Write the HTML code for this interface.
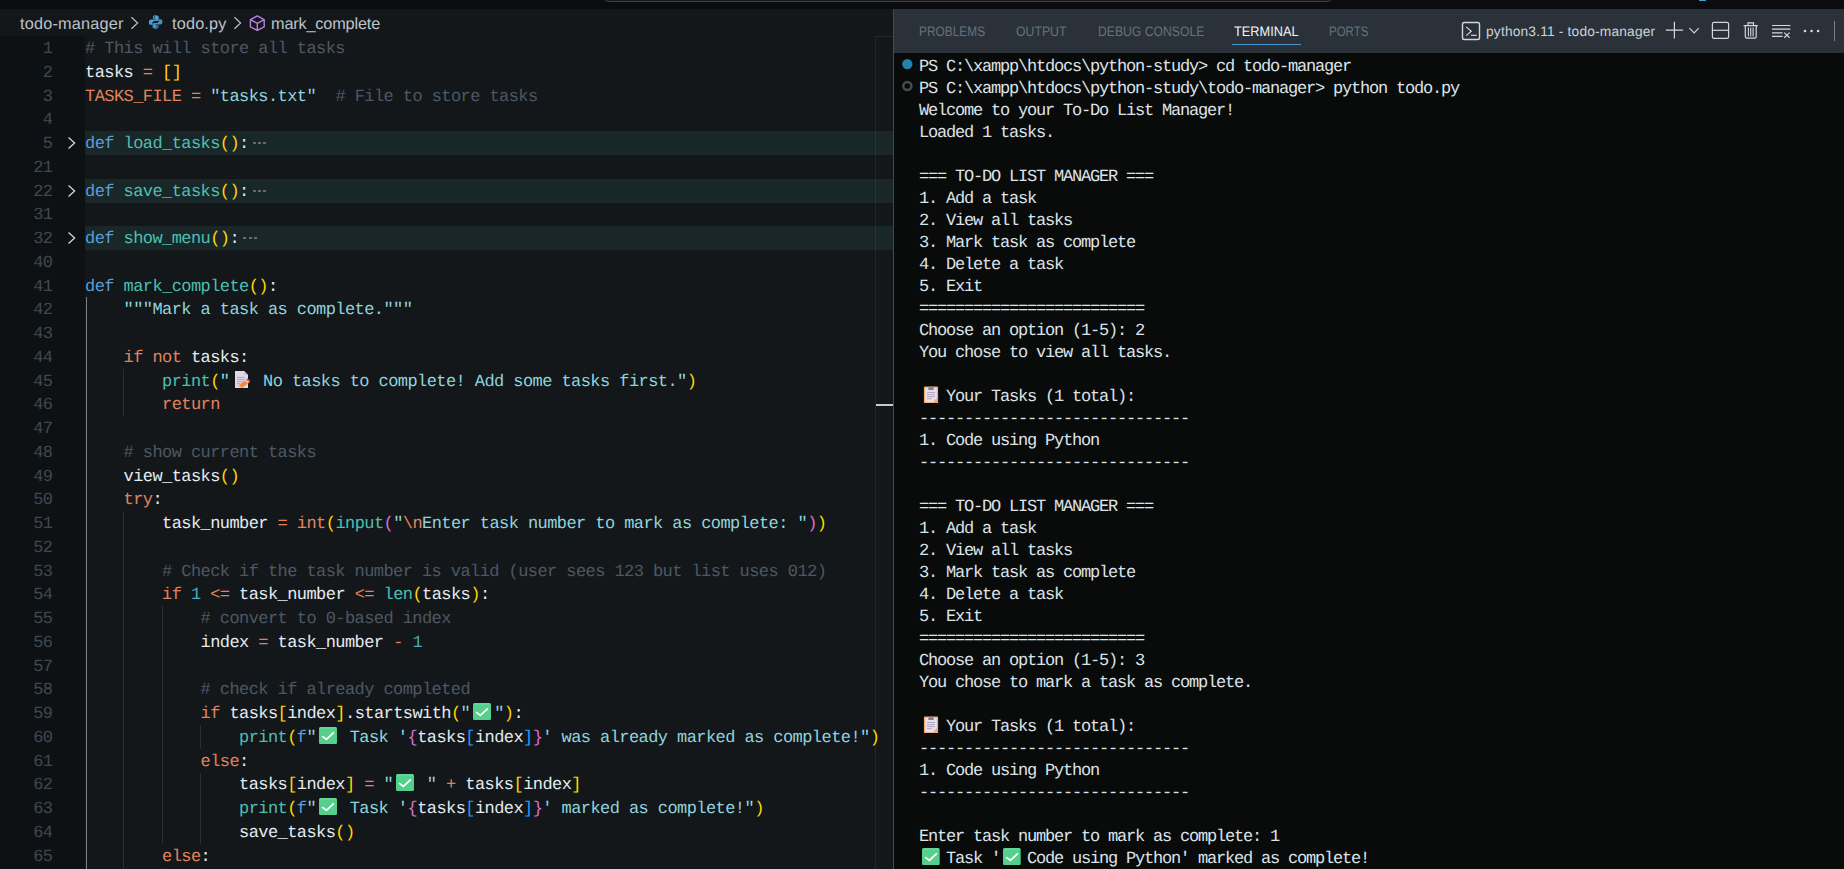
<!DOCTYPE html>
<html lang="en"><head><meta charset="utf-8"><title>todo.py - todo-manager - Visual Studio Code</title>
<style>
*{box-sizing:border-box}
html,body{margin:0;padding:0;overflow:hidden}
body{width:1844px;height:869px;overflow:hidden;position:relative;background:#14171a;
 font-family:"Liberation Sans",sans-serif;color:#d6dde3;text-rendering:geometricPrecision}
#top{position:absolute;left:0;top:0;width:1844px;height:9px;background:#0b0c0f;overflow:hidden}
#search{position:absolute;left:602px;top:-24px;width:732px;height:26px;border:1px solid #3d3f43;border-radius:7px;background:#17181b}
#topblue{position:absolute;left:1699px;top:0;width:7px;height:1px;background:#3f9fd6}
#crumbs{position:absolute;left:0;top:9px;width:893px;height:27.25px;background:#14171a;font-size:16.25px;line-height:31px;color:#bcc3ca;white-space:nowrap}
#crumbs span, #crumbs svg{position:absolute}
#editor{position:absolute;left:0;top:0;width:893px;height:869px;overflow:hidden}
#gutter{position:absolute;left:0;top:36.25px;width:85px;height:840px;background:#0e1113}
.row{position:absolute;left:0;width:893px;height:23.75px;line-height:23.75px;font-family:"Liberation Mono",monospace;font-size:17px;letter-spacing:-0.575px;white-space:pre}
.hl{position:absolute;z-index:0;left:85px;top:0;width:808px;height:23.75px;background:#1a2729}
.num{position:absolute;left:0;top:2px;width:52.5px;text-align:right;color:#3f4851}
.code{position:absolute;z-index:2;left:85px;top:2px;color:#e4ebf1}
.chev{position:absolute;left:66.2px;top:5px}
.g{position:absolute;top:0;width:1px;height:23.75px;display:block}
.g0{background:#7d8083;width:1.25px;top:-0.6px;height:24.35px}
.g1{background:#2a2f34}
.c{color:#4d5863}.v{color:#e4ebf1}.o{color:#e2835c}.k{color:#e2835c}.n{color:#e2835c}
.d{color:#5a9fd8}.f{color:#4ebfb2}.s{color:#8fd4de}.q{color:#8fd4de}.nu{color:#4aa9bd}

.b1{color:#ffd700}.b2{color:#da70d6}.b3{color:#179fff}
.e{display:inline-block;width:24px;height:23.75px;vertical-align:top;position:relative;letter-spacing:0}
.e svg{position:absolute;left:2.9px;top:0}
.ec{position:absolute;left:0;top:0;font-size:0;line-height:0;width:0;height:0;overflow:hidden;opacity:0}
.dots{display:inline-block;width:24px;height:23.75px;vertical-align:top;position:relative}
.dots i{position:absolute;top:9px;width:3px;height:2px;background:#676a6b;display:block}
.dots i:nth-child(1){left:4.4px}.dots i:nth-child(2){left:9.5px}.dots i:nth-child(3){left:14.6px}
#mm{position:absolute;left:875px;top:36px;width:18px;height:840px;border-left:1px solid rgba(255,255,255,0.065);border-top:1px solid rgba(255,255,255,0.065);z-index:1}
#mmark{position:absolute;z-index:3;left:876px;top:404px;width:17px;height:2px;background:#c9c9c9}
#panel{position:absolute;left:893px;top:9px;width:951px;height:860px;background:#090b0b;border-left:1px solid #3f4a51;overflow:hidden}
#phead{position:absolute;left:0;top:0;width:951px;height:44px;background:#2a3138}
.tab{position:absolute;top:14.5px;transform-origin:0 0;font-size:13.75px;line-height:16px;color:#66727e;white-space:nowrap}
.tab.act{color:#f1f4f6}
#tul{position:absolute;left:338px;top:35px;width:69px;height:1.25px;background:#4896cd}
#tname{position:absolute;left:592px;top:13px;font-size:13.75px;letter-spacing:0.18px;line-height:20px;color:#ccd3d9;white-space:nowrap}
#panel svg.ic{position:absolute}
#vsep{position:absolute;left:940px;top:12px;width:1px;height:20px;background:#7b828a}
#term{position:absolute;left:0;top:0;width:1844px;height:869px;overflow:hidden;font-family:"Liberation Mono",monospace;font-size:17px;letter-spacing:-1.2px;color:#dde3e9}
.tr{position:absolute;left:919px;height:22px;line-height:24px;white-space:pre}
.te{display:inline-block;width:18px;height:22px;vertical-align:top;position:relative;letter-spacing:0}
.te svg{position:absolute;left:3px;top:0}
.dot{position:absolute;border-radius:50%}
</style></head>
<body>
<div id="editor"><div id="gutter"></div>
<div class="row" style="top:36.25px"><span class="num" style="top:1.75px">1</span><span class="code" style="top:1.75px"><span class="c"># This will store all tasks</span></span></div>
<div class="row" style="top:60.00px"><span class="num" style="top:2.00px">2</span><span class="code" style="top:2.00px"><span class="v">tasks</span> <span class="o">=</span> <span class="b1">[]</span></span></div>
<div class="row" style="top:83.75px"><span class="num" style="top:2.25px">3</span><span class="code" style="top:2.25px"><span class="n">TASKS_FILE</span> <span class="o">=</span> <span class="q">"</span><span class="s">tasks.txt</span><span class="q">"</span>  <span class="c"># File to store tasks</span></span></div>
<div class="row" style="top:107.50px"><span class="num" style="top:1.50px">4</span></div>
<div class="row fold" style="top:131.25px"><div class="hl"></div><span class="num" style="top:1.75px">5</span><svg class="chev" width="12" height="14" viewBox="0 0 12 14"><path d="M2.5 1.5 L8.6 7 L2.5 12.5" fill="none" stroke="#d2d6da" stroke-width="1.3"/></svg><span class="code" style="top:1.75px"><span class="d">def</span> <span class="f">load_tasks</span><span class="b1">()</span><span class="v">:</span><span class="dots"><i></i><i></i><i></i></span></span></div>
<div class="row" style="top:155.00px"><span class="num" style="top:2.00px">21</span></div>
<div class="row fold" style="top:178.75px"><div class="hl"></div><span class="num" style="top:2.25px">22</span><svg class="chev" width="12" height="14" viewBox="0 0 12 14"><path d="M2.5 1.5 L8.6 7 L2.5 12.5" fill="none" stroke="#d2d6da" stroke-width="1.3"/></svg><span class="code" style="top:2.25px"><span class="d">def</span> <span class="f">save_tasks</span><span class="b1">()</span><span class="v">:</span><span class="dots"><i></i><i></i><i></i></span></span></div>
<div class="row" style="top:202.50px"><span class="num" style="top:1.50px">31</span></div>
<div class="row fold" style="top:226.25px"><div class="hl"></div><span class="num" style="top:1.75px">32</span><svg class="chev" width="12" height="14" viewBox="0 0 12 14"><path d="M2.5 1.5 L8.6 7 L2.5 12.5" fill="none" stroke="#d2d6da" stroke-width="1.3"/></svg><span class="code" style="top:1.75px"><span class="d">def</span> <span class="f">show_menu</span><span class="b1">()</span><span class="v">:</span><span class="dots"><i></i><i></i><i></i></span></span></div>
<div class="row" style="top:250.00px"><span class="num" style="top:2.00px">40</span></div>
<div class="row" style="top:273.75px"><span class="num" style="top:2.25px">41</span><span class="code" style="top:2.25px"><span class="d">def</span> <span class="f">mark_complete</span><span class="b1">()</span><span class="v">:</span></span></div>
<div class="row" style="top:297.50px"><i class="g g0" style="left:85.75px"></i><span class="num" style="top:1.50px">42</span><span class="code" style="top:1.50px">    <span class="q">"""</span><span class="s">Mark a task as complete.</span><span class="q">"""</span></span></div>
<div class="row" style="top:321.25px"><i class="g g0" style="left:85.75px"></i><span class="num" style="top:1.75px">43</span></div>
<div class="row" style="top:345.00px"><i class="g g0" style="left:85.75px"></i><span class="num" style="top:2.00px">44</span><span class="code" style="top:2.00px">    <span class="k">if</span> <span class="k">not</span> <span class="v">tasks:</span></span></div>
<div class="row" style="top:368.75px"><i class="g g0" style="left:85.75px"></i><i class="g g1" style="left:123.00px"></i><span class="num" style="top:2.25px">45</span><span class="code" style="top:2.25px">        <span class="f">print</span><span class="b1">(</span><span class="q">"</span><span class="e"><svg class="em" width="18" height="17.2" viewBox="0 0 18 17.2"><g transform="translate(0.7 0)"><path d="M2.3 0 H11.4 L15.3 3.9 V17.1 H2.3 Z" fill="#e2d8ec"/><path d="M11.4 0 L15.3 3.9 H11.4 Z" fill="#c8bdd6"/><path d="M4.3 6.6 H12 M4.3 8.7 H12 M4.3 10.8 H10.5 M4.3 12.8 H8" stroke="#a9a0b8" stroke-width="0.9" fill="none"/><path d="M5.2 17.1 L6.4 14.2 L14.6 7.4 L17.6 10.4 L9.4 17.1 Z" fill="#f58a3a"/><path d="M5.2 17.1 L6.4 14.2 L8.6 16.6 L8 17.1 Z" fill="#f7d3b0"/><path d="M13.2 8.6 L14.6 7.4 L17.6 10.4 L16.2 11.6 Z" fill="#f2553f"/><path d="M12.3 9.3 L13.2 8.6 L16.2 11.6 L15.3 12.3 Z" fill="#e9dfe6"/></g></svg><span class="ec">📝</span></span><span class="s"> No tasks to complete! Add some tasks first.</span><span class="q">"</span><span class="b1">)</span></span></div>
<div class="row" style="top:392.50px"><i class="g g0" style="left:85.75px"></i><i class="g g1" style="left:123.00px"></i><span class="num" style="top:1.50px">46</span><span class="code" style="top:1.50px">        <span class="k">return</span></span></div>
<div class="row" style="top:416.25px"><i class="g g0" style="left:85.75px"></i><span class="num" style="top:1.75px">47</span></div>
<div class="row" style="top:440.00px"><i class="g g0" style="left:85.75px"></i><span class="num" style="top:2.00px">48</span><span class="code" style="top:2.00px">    <span class="c"># show current tasks</span></span></div>
<div class="row" style="top:463.75px"><i class="g g0" style="left:85.75px"></i><span class="num" style="top:2.25px">49</span><span class="code" style="top:2.25px">    <span class="v">view_tasks</span><span class="b1">()</span></span></div>
<div class="row" style="top:487.50px"><i class="g g0" style="left:85.75px"></i><span class="num" style="top:1.50px">50</span><span class="code" style="top:1.50px">    <span class="k">try</span><span class="v">:</span></span></div>
<div class="row" style="top:511.25px"><i class="g g0" style="left:85.75px"></i><i class="g g1" style="left:123.00px"></i><span class="num" style="top:1.75px">51</span><span class="code" style="top:1.75px">        <span class="v">task_number</span> <span class="o">=</span> <span class="k">int</span><span class="b1">(</span><span class="f">input</span><span class="b2">(</span><span class="q">"</span><span class="k">\n</span><span class="s">Enter task number to mark as complete: </span><span class="q">"</span><span class="b2">)</span><span class="b1">)</span></span></div>
<div class="row" style="top:535.00px"><i class="g g0" style="left:85.75px"></i><i class="g g1" style="left:123.00px"></i><span class="num" style="top:2.00px">52</span></div>
<div class="row" style="top:558.75px"><i class="g g0" style="left:85.75px"></i><i class="g g1" style="left:123.00px"></i><span class="num" style="top:2.25px">53</span><span class="code" style="top:2.25px">        <span class="c"># Check if the task number is valid (user sees 123 but list uses 012)</span></span></div>
<div class="row" style="top:582.50px"><i class="g g0" style="left:85.75px"></i><i class="g g1" style="left:123.00px"></i><span class="num" style="top:1.50px">54</span><span class="code" style="top:1.50px">        <span class="k">if</span> <span class="nu">1</span> <span class="o">&lt;=</span> <span class="v">task_number</span> <span class="o">&lt;=</span> <span class="f">len</span><span class="b1">(</span><span class="v">tasks</span><span class="b1">)</span><span class="v">:</span></span></div>
<div class="row" style="top:606.25px"><i class="g g0" style="left:85.75px"></i><i class="g g1" style="left:123.00px"></i><i class="g g1" style="left:162.00px"></i><span class="num" style="top:1.75px">55</span><span class="code" style="top:1.75px">            <span class="c"># convert to 0-based index</span></span></div>
<div class="row" style="top:630.00px"><i class="g g0" style="left:85.75px"></i><i class="g g1" style="left:123.00px"></i><i class="g g1" style="left:162.00px"></i><span class="num" style="top:2.00px">56</span><span class="code" style="top:2.00px">            <span class="v">index</span> <span class="o">=</span> <span class="v">task_number</span> <span class="o">-</span> <span class="nu">1</span></span></div>
<div class="row" style="top:653.75px"><i class="g g0" style="left:85.75px"></i><i class="g g1" style="left:123.00px"></i><i class="g g1" style="left:162.00px"></i><span class="num" style="top:2.25px">57</span></div>
<div class="row" style="top:677.50px"><i class="g g0" style="left:85.75px"></i><i class="g g1" style="left:123.00px"></i><i class="g g1" style="left:162.00px"></i><span class="num" style="top:1.50px">58</span><span class="code" style="top:1.50px">            <span class="c"># check if already completed</span></span></div>
<div class="row" style="top:701.25px"><i class="g g0" style="left:85.75px"></i><i class="g g1" style="left:123.00px"></i><i class="g g1" style="left:162.00px"></i><span class="num" style="top:1.75px">59</span><span class="code" style="top:1.75px">            <span class="k">if</span> <span class="v">tasks</span><span class="b1">[</span><span class="v">index</span><span class="b1">]</span><span class="v">.startswith</span><span class="b1">(</span><span class="q">"</span><span class="e"><svg class="em" width="18" height="17.2" viewBox="0 0 18 17.2"><rect x="0" y="0" width="18" height="17.2" rx="1.8" fill="#55cf8c"/><rect x="0.4" y="0.4" width="17.2" height="1" rx="0.5" fill="#7fe0aa" opacity="0.7"/><path d="M3.1 9.1 L7.4 12.5 L14.9 5.4" fill="none" stroke="#ffffff" stroke-width="1.7"/></svg><span class="ec">✅</span></span><span class="q">"</span><span class="b1">)</span><span class="v">:</span></span></div>
<div class="row" style="top:725.00px"><i class="g g0" style="left:85.75px"></i><i class="g g1" style="left:123.00px"></i><i class="g g1" style="left:162.00px"></i><i class="g g1" style="left:200.00px"></i><span class="num" style="top:2.00px">60</span><span class="code" style="top:2.00px">                <span class="f">print</span><span class="b1">(</span><span class="d">f</span><span class="q">"</span><span class="e"><svg class="em" width="18" height="17.2" viewBox="0 0 18 17.2"><rect x="0" y="0" width="18" height="17.2" rx="1.8" fill="#55cf8c"/><rect x="0.4" y="0.4" width="17.2" height="1" rx="0.5" fill="#7fe0aa" opacity="0.7"/><path d="M3.1 9.1 L7.4 12.5 L14.9 5.4" fill="none" stroke="#ffffff" stroke-width="1.7"/></svg><span class="ec">✅</span></span><span class="s"> Task '</span><span class="b2">{</span><span class="v">tasks</span><span class="b3">[</span><span class="v">index</span><span class="b3">]</span><span class="b2">}</span><span class="s">' was already marked as complete!</span><span class="q">"</span><span class="b1">)</span></span></div>
<div class="row" style="top:748.75px"><i class="g g0" style="left:85.75px"></i><i class="g g1" style="left:123.00px"></i><i class="g g1" style="left:162.00px"></i><span class="num" style="top:2.25px">61</span><span class="code" style="top:2.25px">            <span class="k">else</span><span class="v">:</span></span></div>
<div class="row" style="top:772.50px"><i class="g g0" style="left:85.75px"></i><i class="g g1" style="left:123.00px"></i><i class="g g1" style="left:162.00px"></i><i class="g g1" style="left:200.00px"></i><span class="num" style="top:1.50px">62</span><span class="code" style="top:1.50px">                <span class="v">tasks</span><span class="b1">[</span><span class="v">index</span><span class="b1">]</span> <span class="o">=</span> <span class="q">"</span><span class="e"><svg class="em" width="18" height="17.2" viewBox="0 0 18 17.2"><rect x="0" y="0" width="18" height="17.2" rx="1.8" fill="#55cf8c"/><rect x="0.4" y="0.4" width="17.2" height="1" rx="0.5" fill="#7fe0aa" opacity="0.7"/><path d="M3.1 9.1 L7.4 12.5 L14.9 5.4" fill="none" stroke="#ffffff" stroke-width="1.7"/></svg><span class="ec">✅</span></span><span class="s"> </span><span class="q">"</span> <span class="o">+</span> <span class="v">tasks</span><span class="b1">[</span><span class="v">index</span><span class="b1">]</span></span></div>
<div class="row" style="top:796.25px"><i class="g g0" style="left:85.75px"></i><i class="g g1" style="left:123.00px"></i><i class="g g1" style="left:162.00px"></i><i class="g g1" style="left:200.00px"></i><span class="num" style="top:1.75px">63</span><span class="code" style="top:1.75px">                <span class="f">print</span><span class="b1">(</span><span class="d">f</span><span class="q">"</span><span class="e"><svg class="em" width="18" height="17.2" viewBox="0 0 18 17.2"><rect x="0" y="0" width="18" height="17.2" rx="1.8" fill="#55cf8c"/><rect x="0.4" y="0.4" width="17.2" height="1" rx="0.5" fill="#7fe0aa" opacity="0.7"/><path d="M3.1 9.1 L7.4 12.5 L14.9 5.4" fill="none" stroke="#ffffff" stroke-width="1.7"/></svg><span class="ec">✅</span></span><span class="s"> Task '</span><span class="b2">{</span><span class="v">tasks</span><span class="b3">[</span><span class="v">index</span><span class="b3">]</span><span class="b2">}</span><span class="s">' marked as complete!</span><span class="q">"</span><span class="b1">)</span></span></div>
<div class="row" style="top:820.00px"><i class="g g0" style="left:85.75px"></i><i class="g g1" style="left:123.00px"></i><i class="g g1" style="left:162.00px"></i><i class="g g1" style="left:200.00px"></i><span class="num" style="top:2.00px">64</span><span class="code" style="top:2.00px">                <span class="v">save_tasks</span><span class="b1">()</span></span></div>
<div class="row" style="top:843.75px"><i class="g g0" style="left:85.75px"></i><i class="g g1" style="left:123.00px"></i><span class="num" style="top:2.25px">65</span><span class="code" style="top:2.25px">        <span class="k">else</span><span class="v">:</span></span></div>
<div class="row" style="top:867.50px"><i class="g g0" style="left:85.75px"></i><i class="g g1" style="left:123.00px"></i><i class="g g1" style="left:162.00px"></i><span class="num" style="top:1.50px">66</span></div>
<div id="mm"></div><div id="mmark"></div></div>
<div id="crumbs"><span id="c1" style="left:20px;letter-spacing:0.2px">todo-manager</span><span id="c2" style="left:172px;letter-spacing:0.18px">todo.py</span><span id="c3" style="left:271px;letter-spacing:-0.16px">mark_complete</span><svg style="left:0;top:0" width="400" height="27" viewBox="0 9 400 27" fill="none"><path d="M131.4 17.2 L137.6 23 L131.4 28.8 M234.4 17.2 L240.6 23 L234.4 28.8" stroke="#b7bcc1" stroke-width="1.25"/><g transform="translate(148.1 14.4) scale(0.945)"><path d="M7.9 0.8 C5.2 0.8 5.1 2 5.1 2.9 V4.6 H8.1 V5.3 H3.2 C1.6 5.3 0.8 6.6 0.8 8.2 C0.8 9.9 1.6 11 3.1 11 H4.6 V9.2 C4.6 7.9 5.6 7 6.8 7 H9.6 C10.6 7 11.3 6.2 11.3 5.2 V2.9 C11.3 1.6 10 0.8 7.9 0.8 Z" fill="#4aa0d2"/><path d="M8.1 15.2 C10.8 15.2 10.9 14 10.9 13.1 V11.4 H7.9 V10.7 H12.8 C14.4 10.7 15.2 9.4 15.2 7.8 C15.2 6.1 14.4 5 12.9 5 H11.4 V6.8 C11.4 8.1 10.4 9 9.2 9 H6.4 C5.4 9 4.7 9.8 4.7 10.8 V13.1 C4.7 14.4 6 15.2 8.1 15.2 Z" fill="#4394c6"/><circle cx="6.6" cy="2.7" r="0.7" fill="#14171a"/><circle cx="9.4" cy="13.3" r="0.7" fill="#14171a"/></g><path d="M257.3 15.9 L264.2 19.6 V26.9 L257.3 30.4 L250.4 26.9 V19.6 Z M250.4 19.6 L257.3 23.3 L264.2 19.6 M257.3 23.3 V30.4" stroke="#b681e0" stroke-width="1.4" stroke-linejoin="round"/></svg></div>
<div id="panel"><div id="phead"><span class="tab" style="left:25.2px;transform:scaleX(0.8650)">PROBLEMS</span><span class="tab" style="left:122.2px;transform:scaleX(0.8916)">OUTPUT</span><span class="tab" style="left:203.5px;transform:scaleX(0.8861)">DEBUG CONSOLE</span><span class="tab act" style="left:340.1px;transform:scaleX(0.9277)">TERMINAL</span><span class="tab" style="left:434.7px;transform:scaleX(0.8339)">PORTS</span><div id="tul"></div><span id="tname">python3.11 - todo-manager</span><svg class="ic" style="left:0;top:0" width="950" height="44" viewBox="894 9 950 44" fill="none" stroke="#d3d7db" stroke-width="1.2"><rect x="1462.5" y="22.5" width="17" height="17" rx="1.8" stroke-width="1.4"/><path d="M1466.2 26.9 L1471.2 31.2 L1466.2 35.6"/><path d="M1471 35.3 H1476.6"/><path d="M1674.4 21.7 V38.6 M1665.8 30.2 H1683"/><path d="M1689.4 28.2 L1694.1 32.9 L1698.8 28.2"/><rect x="1712.4" y="22.3" width="16.2" height="16" rx="1.6"/><path d="M1712.4 30.3 H1728.6"/><path d="M1743.6 25.6 H1757.9 M1748 25.4 V22.9 H1753.5 V25.4 M1745.3 25.8 V36.8 Q1745.3 38.2 1746.7 38.2 H1754.8 Q1756.2 38.2 1756.2 36.8 V25.8"/><path d="M1748.4 27.6 V36.4 M1750.75 27.6 V36.4 M1753.1 27.6 V36.4" stroke-width="1.1"/><path d="M1772 25.5 H1790.4 M1772 29.2 H1790.4 M1772 32.8 H1782.6 M1772 36.4 H1782.6"/><path d="M1784.2 32.6 L1789.6 37.8 M1789.6 32.6 L1784.2 37.8"/><g fill="#d3d7db" stroke="none"><circle cx="1805" cy="31" r="1.35"/><circle cx="1811.6" cy="31" r="1.35"/><circle cx="1818.1" cy="31" r="1.35"/></g></svg><div id="vsep"></div></div></div>
<div id="term">
<svg style="position:absolute;left:897px;top:54px" width="22" height="44" viewBox="897 54 22 44"><circle cx="907.35" cy="64.05" r="5.15" fill="#1f84b0"/><circle cx="907.35" cy="86" r="4.05" fill="none" stroke="#4b4c4d" stroke-width="2.5"/></svg>
<div class="tr" style="top:56px">PS C:\xampp\htdocs\python-study&gt; cd todo-manager</div>
<div class="tr" style="top:78px">PS C:\xampp\htdocs\python-study\todo-manager&gt; python todo.py</div>
<div class="tr" style="top:100px">Welcome to your To-Do List Manager!</div>
<div class="tr" style="top:122px">Loaded 1 tasks.</div>
<div class="tr" style="top:166px">=== TO-DO LIST MANAGER ===</div>
<div class="tr" style="top:188px">1. Add a task</div>
<div class="tr" style="top:210px">2. View all tasks</div>
<div class="tr" style="top:232px">3. Mark task as complete</div>
<div class="tr" style="top:254px">4. Delete a task</div>
<div class="tr" style="top:276px">5. Exit</div>
<div class="tr" style="top:298px">=========================</div>
<div class="tr" style="top:320px">Choose an option (1-5): 2</div>
<div class="tr" style="top:342px">You chose to view all tasks.</div>
<div class="tr" style="top:386px"><span class="te"><svg class="em" width="18" height="17.2" viewBox="0 0 18 17.2"><rect x="1.9" y="0.5" width="14.2" height="16.7" rx="0.9" fill="#f2a864"/><rect x="3.1" y="1.8" width="11.8" height="14.4" fill="#e7e0f4"/><path d="M10.9 16.4 L15.1 12.2 V16.4 Z" fill="#f2a864"/><path d="M10.9 16.2 L11.6 12.9 L14.9 12.2 Z" fill="#d9d1e6"/><path d="M6.3 3.9 V2 Q6.3 1.4 7 1.4 H7.9 Q8.2 0.1 9 0.1 Q9.8 0.1 10.1 1.4 H11 Q11.7 1.4 11.7 2 V3.9 Z" fill="#857d8c"/><path d="M5 6.5 H13 M5 8.6 H13 M5 10.6 H13 M5 12.7 H9.8" stroke="#a8a0b6" stroke-width="0.9" fill="none"/></svg><span class="ec">📋</span></span> Your Tasks (1 total):</div>
<div class="tr" style="top:408px">------------------------------</div>
<div class="tr" style="top:430px">1. Code using Python</div>
<div class="tr" style="top:452px">------------------------------</div>
<div class="tr" style="top:496px">=== TO-DO LIST MANAGER ===</div>
<div class="tr" style="top:518px">1. Add a task</div>
<div class="tr" style="top:540px">2. View all tasks</div>
<div class="tr" style="top:562px">3. Mark task as complete</div>
<div class="tr" style="top:584px">4. Delete a task</div>
<div class="tr" style="top:606px">5. Exit</div>
<div class="tr" style="top:628px">=========================</div>
<div class="tr" style="top:650px">Choose an option (1-5): 3</div>
<div class="tr" style="top:672px">You chose to mark a task as complete.</div>
<div class="tr" style="top:716px"><span class="te"><svg class="em" width="18" height="17.2" viewBox="0 0 18 17.2"><rect x="1.9" y="0.5" width="14.2" height="16.7" rx="0.9" fill="#f2a864"/><rect x="3.1" y="1.8" width="11.8" height="14.4" fill="#e7e0f4"/><path d="M10.9 16.4 L15.1 12.2 V16.4 Z" fill="#f2a864"/><path d="M10.9 16.2 L11.6 12.9 L14.9 12.2 Z" fill="#d9d1e6"/><path d="M6.3 3.9 V2 Q6.3 1.4 7 1.4 H7.9 Q8.2 0.1 9 0.1 Q9.8 0.1 10.1 1.4 H11 Q11.7 1.4 11.7 2 V3.9 Z" fill="#857d8c"/><path d="M5 6.5 H13 M5 8.6 H13 M5 10.6 H13 M5 12.7 H9.8" stroke="#a8a0b6" stroke-width="0.9" fill="none"/></svg><span class="ec">📋</span></span> Your Tasks (1 total):</div>
<div class="tr" style="top:738px">------------------------------</div>
<div class="tr" style="top:760px">1. Code using Python</div>
<div class="tr" style="top:782px">------------------------------</div>
<div class="tr" style="top:826px">Enter task number to mark as complete: 1</div>
<div class="tr" style="top:848px"><span class="te"><svg class="em" width="18" height="17.2" viewBox="0 0 18 17.2"><rect x="0" y="0" width="17.7" height="17.2" rx="1.8" fill="#55cf8c"/><rect x="0.4" y="0.4" width="16.9" height="1" rx="0.5" fill="#7fe0aa" opacity="0.7"/><path d="M3.1 9.1 L7.4 12.5 L14.9 5.4" fill="none" stroke="#ffffff" stroke-width="1.7"/></svg><span class="ec">✅</span></span> Task '<span class="te"><svg class="em" width="18" height="17.2" viewBox="0 0 18 17.2"><rect x="0" y="0" width="17.7" height="17.2" rx="1.8" fill="#55cf8c"/><rect x="0.4" y="0.4" width="16.9" height="1" rx="0.5" fill="#7fe0aa" opacity="0.7"/><path d="M3.1 9.1 L7.4 12.5 L14.9 5.4" fill="none" stroke="#ffffff" stroke-width="1.7"/></svg><span class="ec">✅</span></span> Code using Python' marked as complete!</div>
</div>
<div id="top"><div id="search"></div><div id="topblue"></div></div>
</body></html>
